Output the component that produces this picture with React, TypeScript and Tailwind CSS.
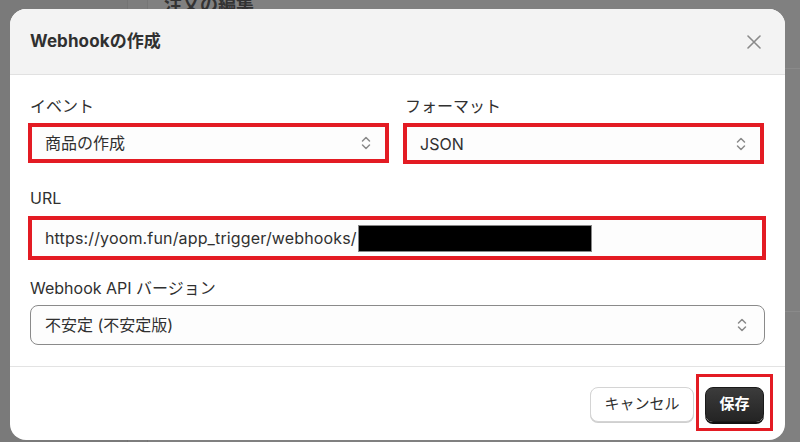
import React from "react";

const font = { fontFamily: '"Inter", "Noto Sans CJK JP", sans-serif' };

function Chevrons() {
  return (
    <svg width="10" height="14" viewBox="0 0 10 14" fill="none" stroke="#8a8a8a" strokeWidth="1.5" strokeLinecap="round" strokeLinejoin="round">
      <path d="M1.5 5 L5 1.5 L8.5 5" />
      <path d="M1.5 9 L5 12.5 L8.5 9" />
    </svg>
  );
}

export default function App() {
  return (
    <div className="relative w-[800px] h-[442px] overflow-hidden bg-[#808080]" style={font}>
      {/* underlying page */}
      <div className="flex h-full">
        <div className="w-[128px] h-full bg-[#7a7a7a] border-r border-[#747474]" />
        <div className="w-[20px] h-full bg-[#7d7d7d] border-r border-[#767676]" />
        <div className="flex-1 h-full relative">
          <div className="absolute left-[16px] top-[-9px] text-[18px] font-bold text-[#333333]">注文の編集</div>
          <div className="absolute left-0 right-0 top-[68px] border-t border-[#8a8a8a]" />
          <div className="absolute left-0 right-0 top-[311px] border-t border-[#8a8a8a]" />
        </div>
      </div>

      {/* modal */}
      <div className="absolute left-[10px] top-[9px] w-[775px] h-[431px] bg-white rounded-2xl overflow-hidden flex flex-col">
        <div className="h-[66px] bg-[#f3f3f3] border-b border-[#e1e1e1] flex items-center justify-between pl-[20px] pr-[24px] shrink-0">
          <div className="text-[17px] font-bold text-[#303030] tracking-[0.1px]">Webhookの作成</div>
          <svg width="14" height="14" viewBox="0 0 14 14" stroke="#8a8a8a" strokeWidth="1.6" strokeLinecap="round">
            <path d="M1 1 L13 13 M13 1 L1 13" />
          </svg>
        </div>

        <div className="px-[20px] pt-[20px] pb-[21px] border-b border-[#e3e3e3] text-[#303030] text-[16px]">
          <div className="flex gap-[14px]">
            <div className="w-[361px] -ml-[2px]">
              <div className="h-[22px] leading-[22px] pl-[2px] mb-[6px]">イベント</div>
              <div className="h-[40px] border-[4px] border-[#e31b23] bg-[#fdfdfd] flex items-center justify-between pl-[13px] pr-[14px]">
                <span>商品の作成</span>
                <Chevrons />
              </div>
            </div>
            <div className="w-[361px]">
              <div className="h-[22px] leading-[22px] pl-[2px] mb-[6px]">フォーマット</div>
              <div className="h-[41px] border-[4px] border-[#e31b23] bg-[#fdfdfd] flex items-center justify-between pl-[13px] pr-[14px]">
                <span>JSON</span>
                <Chevrons />
              </div>
            </div>
          </div>

          <div className="mt-[23px] h-[22px] leading-[22px]">URL</div>
          <div className="mt-[7px] -ml-[2px] w-[738px] h-[44px] border-[4px] border-[#e31b23] bg-[#fdfdfd] flex items-center pl-[13px]">
            <span className="whitespace-nowrap tracking-[0.15px]">https://yoom.fun/app_trigger/webhooks/</span>
            <div className="w-[234px] h-[27px] bg-black border border-[#888888] ml-[1px]" />
          </div>

          <div className="mt-[17px] h-[22px] leading-[22px]">Webhook API バージョン</div>
          <div className="mt-[6px] h-[40px] border border-[#8a8a8a] rounded-[8px] bg-[#fdfdfd] flex items-center justify-between pl-[14px] pr-[17px]">
            <span>不安定 (不安定版)</span>
            <Chevrons />
          </div>
        </div>

        <div className="flex-1 flex justify-end items-start pt-[20px] pr-[21px] gap-[11px]">
          <button className="h-[35px] w-[104px] rounded-[8px] bg-white border border-[#d4d4d4] shadow-[0_1px_0_#cfcfcf] text-[15px] text-[#303030]" style={font}>
            キャンセル
          </button>
          <div className="relative">
            <button className="h-[35px] w-[59px] rounded-[8px] bg-gradient-to-b from-[#3c3c3c] to-[#242424] border border-[#1a1a1a] shadow-[0_2px_0_#111] text-[15px] font-bold text-white" style={font}>
              保存
            </button>
            <div className="absolute -left-[9px] -right-[9px] -top-[13px] -bottom-[9px] border-[3px] border-[#e31b23]" />
          </div>
        </div>
      </div>
    </div>
  );
}
